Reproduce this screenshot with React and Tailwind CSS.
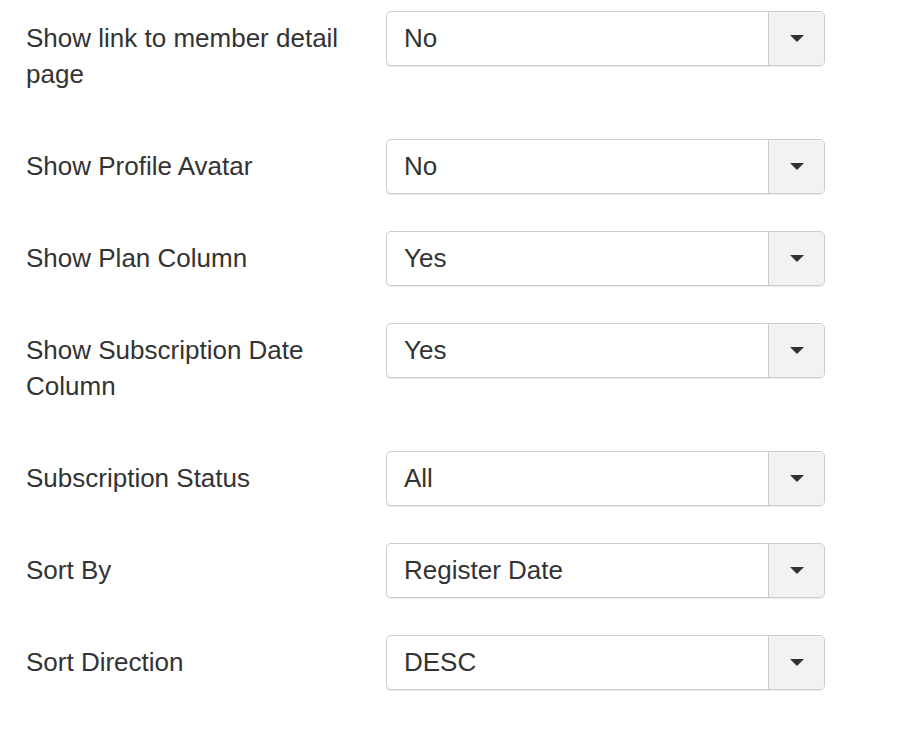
import React from 'react';

const rows = [
  { label: 'Show link to member detail page', value: 'No' },
  { label: 'Show Profile Avatar', value: 'No' },
  { label: 'Show Plan Column', value: 'Yes' },
  { label: 'Show Subscription Date Column', value: 'Yes' },
  { label: 'Subscription Status', value: 'All' },
  { label: 'Sort By', value: 'Register Date' },
  { label: 'Sort Direction', value: 'DESC' },
];

const Select = ({ value }) => (
  <div className="flex h-[55px] w-[439px] rounded-[5px] border border-[#cccccc] bg-white shadow-[0_1px_1px_rgba(0,0,0,0.08)]">
    <div className="flex flex-1 items-center pl-[17px] text-[26px] text-[#333333]">{value}</div>
    <div className="flex w-[56px] items-center justify-center rounded-r-[4px] border-l border-[#cccccc] bg-[#f2f2f2]">
      <svg width="14" height="7" viewBox="0 0 14 7">
        <path d="M0 0 L14 0 L7 7 Z" fill="#333333" />
      </svg>
    </div>
  </div>
);

export default function App() {
  return (
    <div
      className="min-h-[756px] bg-white pl-[26px] pt-[11px] text-[#333333]"
      style={{ fontFamily: '"Liberation Sans", Arial, sans-serif' }}
    >
      {rows.map((row) => (
        <div key={row.label} className="flex items-start">
          <div className="mr-[30px] w-[330px] pt-[9px] pb-[47px] text-[26px] leading-[36px]">{row.label}</div>
          <Select value={row.value} />
        </div>
      ))}
    </div>
  );
}
